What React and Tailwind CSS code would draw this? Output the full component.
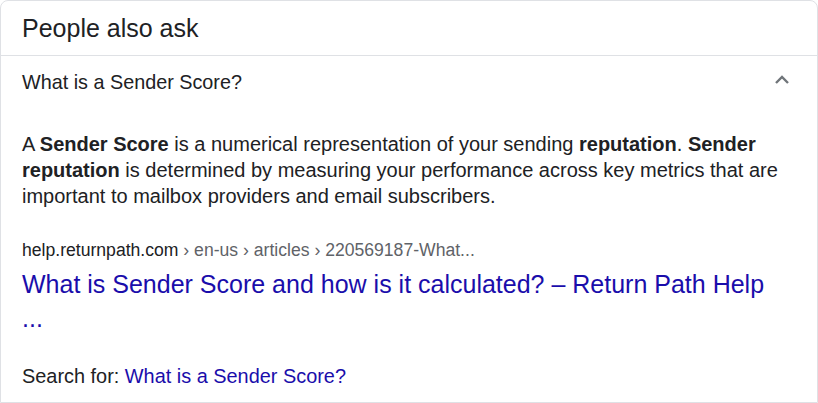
export default function App() {
  return (
    <div className="w-[818px] h-[403px] bg-white" style={{ fontFamily: '"Liberation Sans", Arial, sans-serif' }}>
      <div className="h-[403px] border border-[#dfe1e5] rounded-t-[8px] flex flex-col text-[#202124]">
        <div className="h-[55px] flex items-center px-[21px] border-b border-[#dfe1e5]">
          <span className="text-[25px] leading-none">People also ask</span>
        </div>
        <div className="h-[54px] flex items-center justify-between pl-[21px] pr-[27px]">
          <span className="text-[19.8px]">What is a Sender Score?</span>
          <svg width="16" height="10" viewBox="0 0 16 10" className="mt-[-6px]">
            <path d="M2 8 L8 2 L14 8" fill="none" stroke="#70757a" strokeWidth="2.4" />
          </svg>
        </div>
        <div className="px-[21px] pt-[21px]">
          <p className="text-[20px] leading-[26px]">
            A <b>Sender Score</b> is a numerical representation of your sending <b>reputation</b>. <b>Sender reputation</b> is determined by measuring your performance across key metrics that are important to mailbox providers and email subscribers.
          </p>
          <div className="mt-[29px] text-[17.6px] leading-[24px] text-[#5f6368]">
            <span className="text-[#202124]">help.returnpath.com</span> › en-us › articles › 220569187-What...
          </div>
          <a className="block w-[752px] mt-[5px] text-[25px] leading-[34px] text-[#1a0dab]">
            What is Sender Score and how is it calculated? – Return Path Help ...
          </a>
          <div className="mt-[28px] text-[19.9px] leading-[26px]">
            Search for: <span className="text-[#1a0dab]">What is a Sender Score?</span>
          </div>
        </div>
      </div>
    </div>
  );
}
